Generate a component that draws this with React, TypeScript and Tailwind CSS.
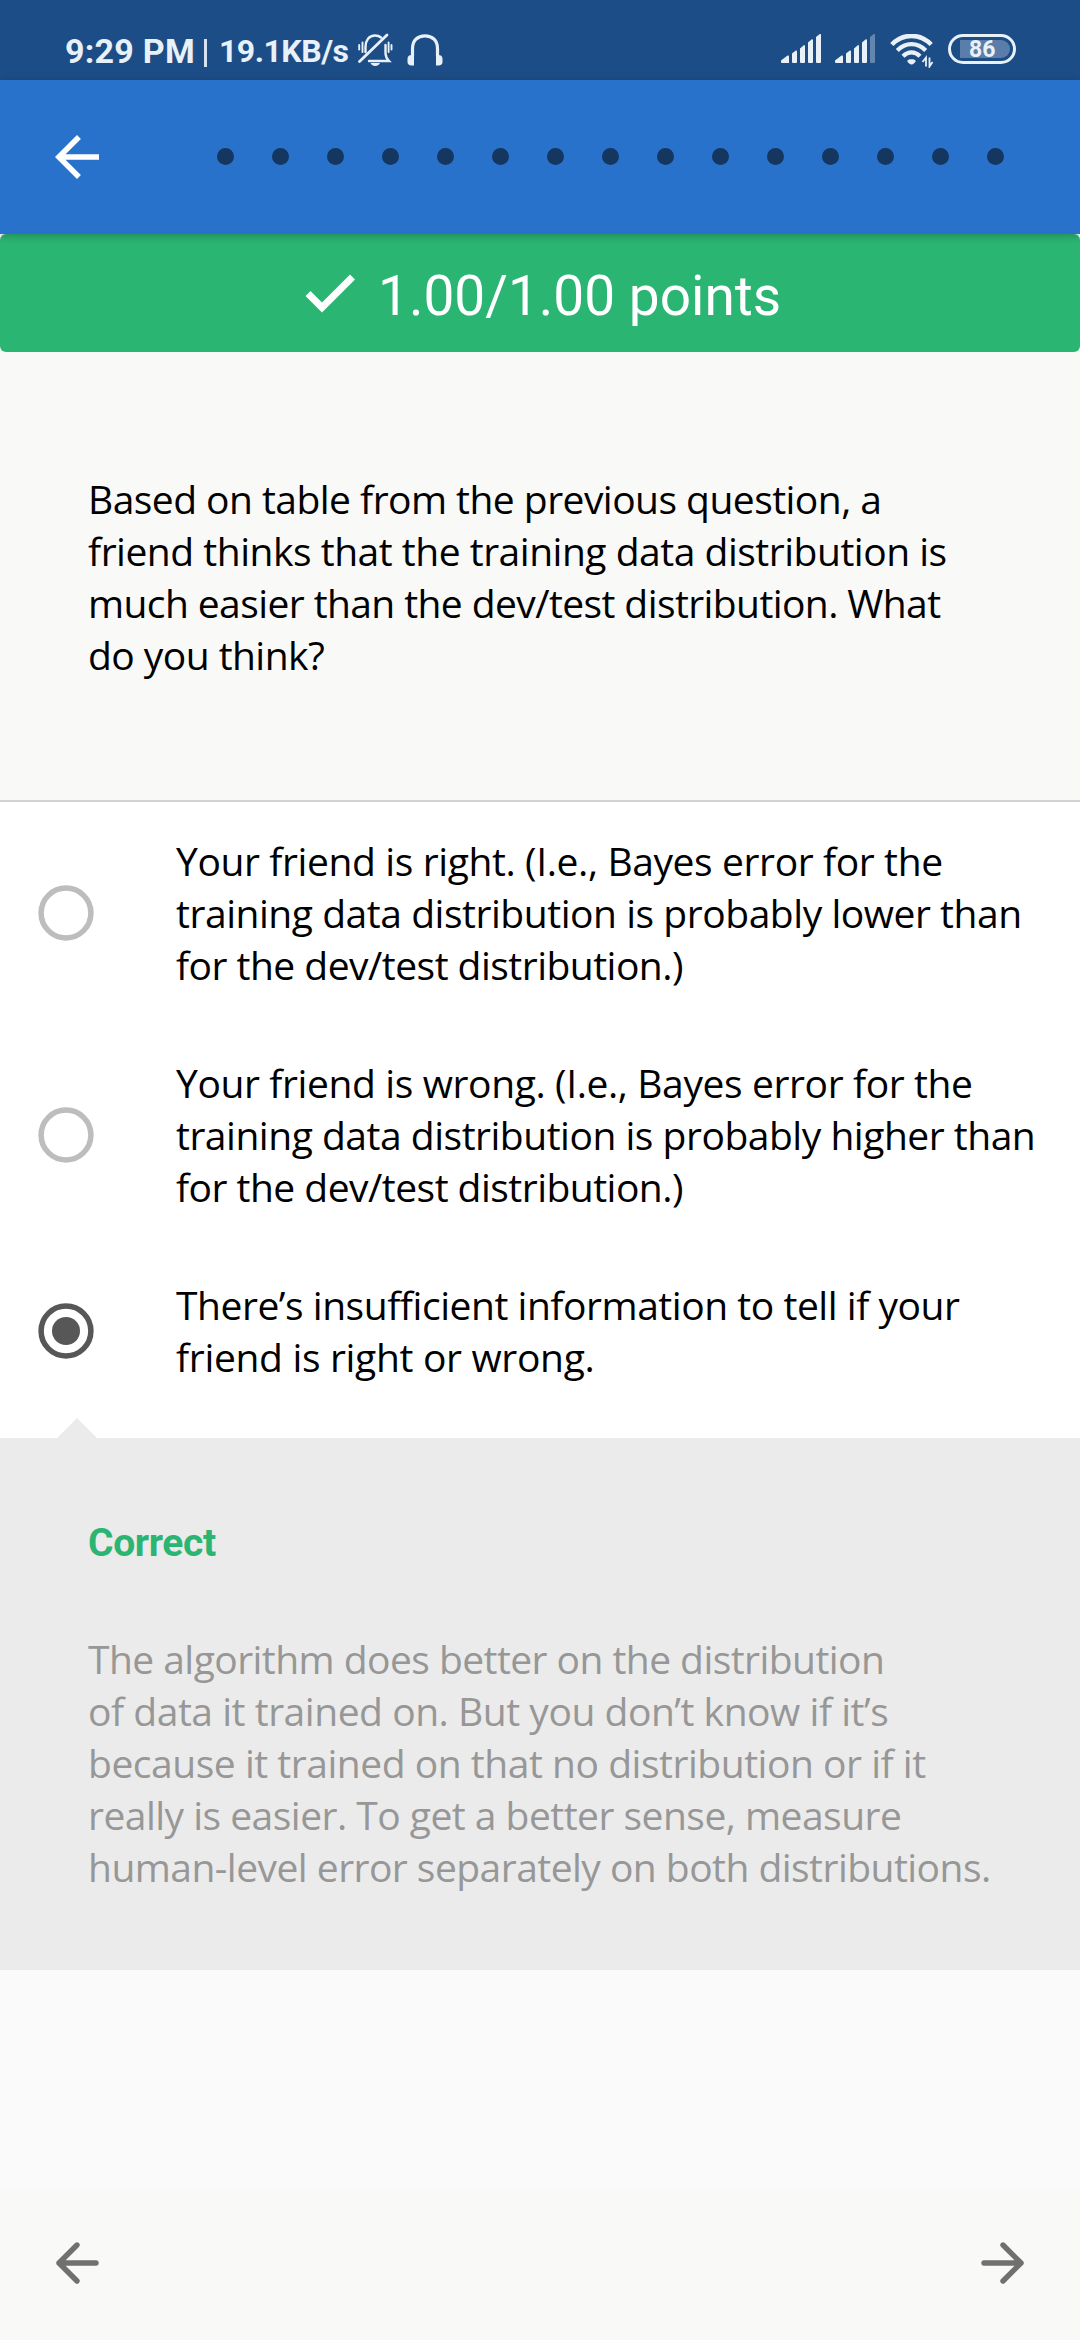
import React from "react";

// A line of body text with its tracking in pixels.
type Line = [text: string, tracking: number];

const options: { lines: Line[]; selected: boolean }[] = [
  {
    lines: [
      ["Your friend is right. (I.e., Bayes error for the", -0.39],
      ["training data distribution is probably lower than", -0.46],
      ["for the dev/test distribution.)", -0.52],
    ],
    selected: false,
  },
  {
    lines: [
      ["Your friend is wrong. (I.e., Bayes error for the", -0.39],
      ["training data distribution is probably higher than", -0.485],
      ["for the dev/test distribution.)", -0.52],
    ],
    selected: false,
  },
  {
    lines: [
      ["There’s insufficient information to tell if your", -0.46],
      ["friend is right or wrong.", -0.33],
    ],
    selected: true,
  },
];

const question: Line[] = [
  ["Based on table from the previous question, a", -0.54],
  ["friend thinks that the training data distribution is", -0.485],
  ["much easier than the dev/test distribution. What", -0.59],
  ["do you think?", -0.55],
];

const feedback: Line[] = [
  ["The algorithm does better on the distribution", -0.55],
  ["of data it trained on. But you don’t know if it’s", -0.465],
  ["because it trained on that no distribution or if it", -0.47],
  ["really is easier. To get a better sense, measure", -0.52],
  ["human-level error separately on both distributions.", -0.535],
];

function Lines({ lines }: { lines: Line[] }) {
  return (
    <>
      {lines.map(([text, tracking]) => (
        <span key={text} className="block whitespace-nowrap" style={{ letterSpacing: tracking }}>
          {text}
        </span>
      ))}
    </>
  );
}

function BellOff() {
  return (
    <svg width="36" height="36" viewBox="0 0 36 36" fill="none" stroke="#e8f0f8" strokeWidth="2.4" strokeLinecap="round">
      <path d="M8.500 20V15C8.500 8.500 12 3.500 18 3.500C20.500 3.500 22.500 4.200 24 5.500" />
      <path d="M28.500 13V21C28.500 25 30 27 32 29H12" />
      <path d="M2.500 29.500L30 3" strokeWidth="2.8" />
      <path d="M5.500 10.500V20M2.200 13V17.500M31.600 10.500V20M34.500 13V17.500" strokeWidth="1.900" />
      <path d="M13.500 31H23C22 33 20.500 34 18.200 34S14.500 33 13.500 31Z" fill="#e8f0f8" stroke="none" />
    </svg>
  );
}

function Headphones() {
  return (
    <svg width="36" height="34" viewBox="0 0 36 34" fill="none">
      <path d="M5.500 22V14.500C5.500 6 11 1.800 18 1.800S30.500 6 30.500 14.500V22" stroke="#e8f0f8" strokeWidth="3.200" />
      <path d="M7 21V31.500H4.500C2 31.500 .5 30 .5 28V25C.5 22.500 2 21 4.500 21Z" fill="#e8f0f8" />
      <path d="M29 21V31.500H31.500C34 31.500 35.500 30 35.500 28V25C35.500 22.500 34 21 31.500 21Z" fill="#e8f0f8" />
    </svg>
  );
}

function Signal({ weak = false }: { weak?: boolean }) {
  return (
    <svg width="41" height="30" viewBox="0 0 41 30" fill="#e8f0f8">
      <path d="M0 28V26.500L6.500 21.500Q8 21 8 22.500V29H1Q0 29 0 28Z" />
      <path d="M11 19.500L14.800 16.500Q16 16.200 16 17.500V28Q16 29 15 29H12Q11 29 11 28Z" />
      <path d="M19 14.500L22.800 11.200Q24 10.800 24 12.200V28Q24 29 23 29H20Q19 29 19 28Z" />
      <path d="M27 8.500L30.800 5.300Q32 4.900 32 6.200V28Q32 29 31 29H28Q27 29 27 28Z" />
      <path d="M35 3L38.800 0Q40 -.3 40 1V28Q40 29 39 29H36Q35 29 35 28Z" opacity={weak ? 0.35 : 1} />
    </svg>
  );
}

function Wifi() {
  return (
    <svg width="44" height="34" viewBox="0 0 44 34" fill="none" stroke="#e8f0f8">
      <path d="M1.800 10.500C13 -1 30 -1 41.200 10.500" strokeWidth="4.500" />
      <path d="M7.300 16.500C15.500 8 27.500 8 35.700 16.500" strokeWidth="4.200" />
      <path d="M13 22.200C18 17 25 17 30 22.200" strokeWidth="4.200" />
      <path d="M17.300 27C17.300 24.500 25.700 24.500 25.700 27C25.500 28.500 23 30.500 21.500 30.500S17.500 28.500 17.300 27Z" fill="#e8f0f8" stroke="none" />
      <path d="M36 32.500V23.500L32.500 28M39.500 23.500V32.500L42.500 28" strokeWidth="1.800" />
    </svg>
  );
}

function Arrow({ right = false }: { right?: boolean }) {
  return (
    <svg width="44" height="44" viewBox="0 0 44 44" fill="none" stroke="#70706f" strokeWidth="5.400" strokeLinecap="round" strokeLinejoin="round" className={right ? "rotate-180" : ""}>
      <path d="M41 22H4M22 4L4 22L22 40" />
    </svg>
  );
}

function Radio({ selected }: { selected: boolean }) {
  return (
    <svg width="56" height="56" viewBox="0 0 56 56" fill="none" className="shrink-0">
      <circle cx="28" cy="28" r="24.900" stroke={selected ? "#575757" : "#bdbdbd"} strokeWidth="5.500" />
      {selected && <circle cx="28" cy="28" r="14" fill="#575757" />}
    </svg>
  );
}

export default function App() {
  return (
    <div className="flex h-[2340px] w-[1080px] flex-col overflow-hidden bg-[#fafafa] font-['Open_Sans',sans-serif] text-[39px] leading-[52px] text-black">
      <div className="flex h-20 shrink-0 items-start justify-between bg-[#1d4d86] pr-16 pl-[65px] font-['Roboto',sans-serif] font-bold text-[#e8f0f8]">
        <div className="flex pt-[32px]">
          <span className="w-[131px] text-[34px] leading-[38px] tracking-[0.25px] whitespace-nowrap">9:29 PM</span>
          <span className="mt-[7px] ml-[8px] h-7 w-[3px] bg-[#d6e2ef]" />
          <span className="ml-[12px] w-[133px] text-[32px] leading-[38px] tracking-[-0.5px] whitespace-nowrap">19.1KB/s</span>
          <span className="ml-[5px]"><BellOff /></span>
          <span className="mt-[2px] ml-[14px]"><Headphones /></span>
        </div>
        <div className="flex pt-[34px]">
          <Signal />
          <span className="ml-[13px]"><Signal weak /></span>
          <span className="ml-[14px]"><Wifi /></span>
          <span className="ml-[14px] flex h-[30px] w-[68px] items-center justify-center rounded-full border-[3px] border-[#e8f0f8]">
            <span className="ml-[6px] flex h-[18px] w-[50px] items-center rounded-l-[2px] rounded-r-full bg-[#5a7ea9] pl-[9px] text-[23px] leading-[18px]">
              <span className="pt-[2px]">86</span>
            </span>
          </span>
        </div>
      </div>

      <header className="relative z-10 flex h-[154px] shrink-0 items-center bg-[#2972cc] pl-11 shadow-[0_2px_8px_rgba(0,0,0,0.25)]">
        <svg width="66" height="66" viewBox="0 0 24 24" fill="white">
          <path d="M20 11H7.830l5.590-5.590L12 4l-8 8 8 8 1.410-1.410L7.830 13H20v-2z" />
        </svg>
        <div className="mb-px ml-[106.5px] flex gap-[38px]">
          {Array.from({ length: 15 }, (_, i) => (
            <span key={i} className="size-[17px] rounded-full bg-[#15365f]" />
          ))}
        </div>
      </header>

      <div className="flex h-[118px] shrink-0 items-center rounded-[6px] bg-[#2bb573] pl-[305px] font-['Roboto',sans-serif] text-[55px] leading-[66px] text-white">
        <svg width="50" height="40" viewBox="0 0 50 40" fill="none" stroke="white" strokeWidth="7">
          <path d="M3 20.500L17 34.500L47.500 4" />
        </svg>
        <span className="ml-[23px] pt-[6px] whitespace-nowrap">1.00/1.00 points</span>
      </div>

      <section className="h-[450px] shrink-0 border-b-2 border-[#d3d3d2] bg-[#f9f9f8] pt-[121px] pl-[88px]">
        <Lines lines={question} />
      </section>

      <section className="h-[636px] shrink-0 bg-white">
        {options.map((o) => (
          <div key={o.lines[0][0]} className="flex items-center py-[33px] pl-[38px]">
            <Radio selected={o.selected} />
            <p className="ml-[82px]">
              <Lines lines={o.lines} />
            </p>
          </div>
        ))}
      </section>

      <section className="relative h-[532px] shrink-0 bg-[#ebebeb] pt-[79px] pl-[88px]">
        <svg width="40" height="20" viewBox="0 0 40 20" className="absolute -top-5 left-[57px]" fill="#ebebeb">
          <path d="M0 20L20 0L40 20Z" />
        </svg>
        <h2 className="font-['Roboto',sans-serif] font-bold tracking-[-0.35px] text-[#2bb573]">Correct</h2>
        <p className="mt-[64px] text-[#979797]">
          <Lines lines={feedback} />
        </p>
      </section>

      <nav className="mt-auto flex h-[154px] items-center justify-between bg-[#f9f9f8] px-[55px]">
        <Arrow />
        <Arrow right />
      </nav>
    </div>
  );
}
